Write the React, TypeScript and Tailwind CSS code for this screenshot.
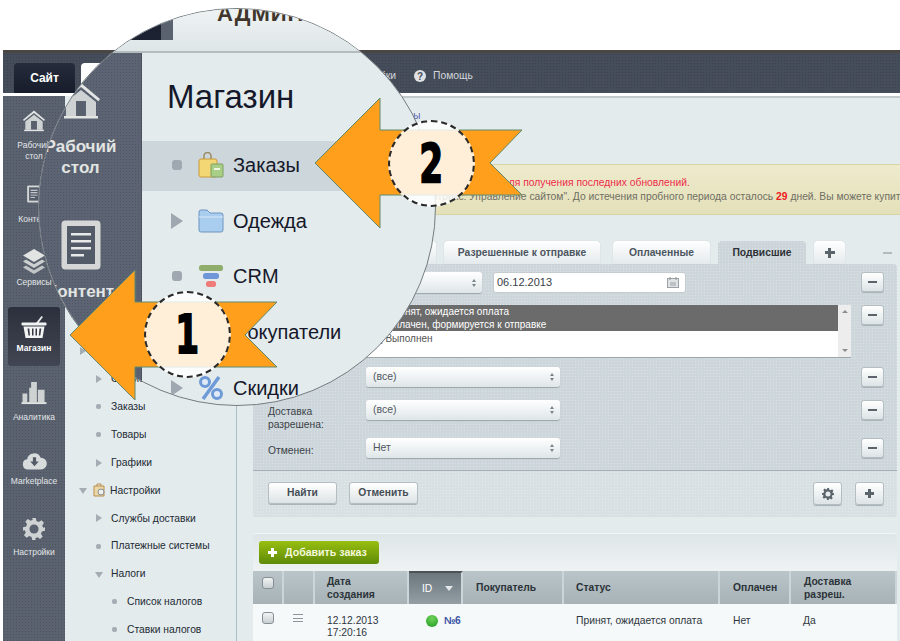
import { ReactNode } from "react";

const FONT = "[font-family:'Liberation_Sans',Arial,sans-serif]";
const DOTS_DARK =
  "[background-image:radial-gradient(rgba(0,0,0,0.14)_0.7px,transparent_0.8px)] [background-size:3px_3px]";
const DOTS_LIGHT =
  "[background-image:radial-gradient(rgba(255,255,255,0.3)_0.7px,transparent_0.8px)] [background-size:3px_3px]";

// Icons
const House = ({ className }: { className: string }) => (
  <svg viewBox="0 0 40 38" className={className}>
    <path d="M1 17 20 1l19 16-1.600 2.200L20 5 2.600 19.200z" fill="#e3e5e4" />
    <path fillRule="evenodd" d="M5 20 20 8l15 12v14H5zM15 19v15h10V19z" fill="#cfd2d2" />
    <rect x="16" y="20" width="8" height="14" fill="#59606d" />
    <rect x="3" y="34" width="34" height="2.500" fill="#e3e5e4" />
  </svg>
);
const Doc = ({ className }: { className: string }) => (
  <svg viewBox="0 0 40 50" className={className}>
    <rect x="0.500" y="0.500" width="39" height="49" rx="4" fill="#d4d7d6" />
    <rect x="6" y="6" width="28" height="38" fill="#535a68" />
    <path d="M10 13h20v2.500H10zM10 20h20v2.500H10zM10 27h20v2.500H10zM10 34h13v2.500H10z" fill="#e8eaea" />
  </svg>
);
const Layers = ({ className }: { className: string }) => (
  <svg viewBox="0 0 24 25" className={className}>
    <path d="M12 0 23 6.500 12 13 1 6.500z" fill="#e2e4e3" />
    <path d="M4 10.500 12 15.200l8-4.700 3 2L12 19 1 12.500z" fill="#cdd0d0" />
    <path d="M4 16.500 12 21.200l8-4.700 3 2L12 25 1 18.500z" fill="#c0c4c4" />
  </svg>
);
const Basket = ({ className }: { className: string }) => (
  <svg viewBox="0 0 26 24" className={className}>
    <path d="M15 8 20.500 1l1.400 1L17.500 8z" fill="#e9ebeb" />
    <rect x="0.500" y="7.500" width="25" height="3" rx="1" fill="#f2f3f3" />
    <path fillRule="evenodd" d="M2.500 11.500h21L21.500 23h-17zM6.500 13.500l1 7h1.500l-.7-7zM11 13.500v7h1.500v-7zM14.500 13.500v7H16v-7zM18.500 13.500l-.7 7h1.500l1-7z" fill="#f2f3f3" />
  </svg>
);
const Bars = ({ className }: { className: string }) => (
  <svg viewBox="0 0 26 24" className={className}>
    <path d="M1 12h5v9H1zM8 6h4v15H8zM10 0h6v21h-6zM17 8h7v13h-7z" fill="#cfd2d2" />
    <rect y="21" width="26" height="2" fill="#e3e5e4" />
  </svg>
);
const Cloud = ({ className }: { className: string }) => (
  <svg viewBox="0 0 26 19" className={className}>
    <path d="M6 18.500a5.500 5.500 0 0 1-.8-10.900A7.500 7.500 0 0 1 19.500 6 6.200 6.200 0 0 1 20 18.500z" fill="#d8dbdb" />
    <path d="M11.300 5.500h3.400V10h2.800L13 15 8.500 10h2.800z" fill="#535a68" />
  </svg>
);
const Gear = ({ className, fill = "#cfd2d2", hole = "#5a6270" }: { className: string; fill?: string; hole?: string }) => (
  <svg viewBox="0 0 24 24" className={className}>
    <path
      d="M10 0h4l.7 3.400 2.500 1 2.900-1.900 2.800 2.800-1.900 2.900 1 2.500L24 10v4l-3.400.7-1 2.500 1.900 2.900-2.800 2.800-2.900-1.900-2.500 1L14 24h-4l-.7-3.400-2.500-1-2.900 1.900-2.800-2.800 1.900-2.900-1-2.500L0 14v-4l3.400-.7 1-2.500-1.900-2.900L5.300 1.100l2.900 1.900 2.500-1z"
      fill={fill}
    />
    <circle cx="12" cy="12" r="5" fill={hole} />
  </svg>
);

const sideItems = [
  { icon: <House className="w-[24px] h-[22px]" />, label: "Рабочий стол", cls: "pt-[10px]", gap: "mt-[8px]" },
  { icon: <Doc className="w-[14px] h-[22px]" />, label: "Контент", cls: "pt-[15px]", gap: "mt-[9px]" },
  { icon: <Layers className="w-[24px] h-[25px]" />, label: "Сервисы", cls: "pt-[14px]", gap: "mt-[3px]" },
  { icon: <Basket className="w-[26px] h-[24px]" />, label: "Магазин", cls: "pt-[12px]", gap: "mt-[4px]", active: true },
  { icon: <Bars className="w-[26px] h-[23px]" />, label: "Аналитика", cls: "pt-[12px]", gap: "mt-[7px]" },
  { icon: <Cloud className="w-[25px] h-[18px]" />, label: "Marketplace", cls: "pt-[14px]", gap: "mt-[6px]" },
  { icon: <Gear className="w-[22px] h-[22px]" />, label: "Настройки", cls: "pt-[13px]", gap: "mt-[7px]" },
];

const navItems = [
  { label: "Отчеты", marker: "right", x: "ml-[14px]" },
  { label: "Статистика", marker: "right", x: "ml-[30px]" },
  { label: "Заказы", marker: "dot", x: "ml-[30px]" },
  { label: "Товары", marker: "dot", x: "ml-[30px]" },
  { label: "Графики", marker: "right", x: "ml-[30px]" },
  { label: "Настройки", marker: "down", x: "ml-[14px]", folder: true },
  { label: "Службы доставки", marker: "right", x: "ml-[30px]" },
  { label: "Платежные системы", marker: "dot", x: "ml-[30px]" },
  { label: "Налоги", marker: "down", x: "ml-[30px]" },
  { label: "Список налогов", marker: "dot", x: "ml-[46px]" },
  { label: "Ставки налогов", marker: "dot", x: "ml-[46px]" },
];

const Marker = ({ type }: { type: string }) => {
  if (type === "dot") return <span className="w-[5px] h-[5px] rounded-[2px] bg-[#a4adb4] mx-[1px]" />;
  if (type === "right")
    return <span className="w-0 h-0 border-y-[4px] border-y-transparent border-l-[6px] border-l-[#a4adb4]" />;
  return <span className="w-0 h-0 border-x-[4px] border-x-transparent border-t-[6px] border-t-[#a4adb4] mt-[1px]" />;
};

const NavRow = ({ item }: { item: (typeof navItems)[number] }) => (
  <div className="h-[27.900px] flex items-center text-[10.300px] text-[#222a33]">
    <div className={`${item.x} w-[7px] flex justify-center shrink-0`}>
      <Marker type={item.marker} />
    </div>
    {item.folder ? (
      <svg viewBox="0 0 12 14" className="w-[12px] h-[14px] ml-[7px]">
        <path d="M1 3h10v10H1z" fill="#ecd7a8" stroke="#b98f4c" />
        <path d="M4 3V1h4v2" fill="none" stroke="#b98f4c" />
        <circle cx="8" cy="9" r="3" fill="#eef0f0" stroke="#8a8f92" />
      </svg>
    ) : null}
    <span className={item.folder ? "ml-[5px]" : "ml-[9px]"}>{item.label}</span>
  </div>
);

const Tab = ({ children, w, active }: { children?: ReactNode; w: string; active?: boolean }) => (
  <div
    className={`${w} h-[23px] rounded-t-[4px] flex items-center justify-center text-[10.300px] font-bold ${
      active
        ? `bg-[#ccd5d9] text-[#2c3036] ${DOTS_LIGHT}`
        : "bg-gradient-to-b from-white to-[#e4eaec] text-[#4c5560] shadow-[0_0_1px_#a9b3b8]"
    }`}
  >
    {children}
  </div>
);

const Select = ({ text, className }: { text: string; className: string }) => (
  <div
    className={`${className} rounded-[3px] bg-gradient-to-b from-white to-[#dfe6e8] shadow-[0_1px_1px_#9ba6ab] flex items-center justify-between pl-[7px] pr-[6px] text-[10.500px] text-[#505860]`}
  >
    <span>{text}</span>
    <span className="flex flex-col gap-[2px]">
      <span className="w-0 h-0 border-x-[2.500px] border-x-transparent border-b-[3px] border-b-[#7b8489]" />
      <span className="w-0 h-0 border-x-[2.500px] border-x-transparent border-t-[3px] border-t-[#7b8489]" />
    </span>
  </div>
);

const SquareBtn = ({ children, className }: { children: ReactNode; className: string }) => (
  <div
    className={`${className} rounded-[3px] bg-gradient-to-b from-white to-[#dde4e6] border border-[#b4bdc2] shadow-[0_1px_0_#aab3b7] flex items-center justify-center shrink-0`}
  >
    {children}
  </div>
);

const Minus = () => (
  <SquareBtn className="w-[23px] h-[20px]">
    <span className="w-[9px] h-[2px] bg-[#5c646b]" />
  </SquareBtn>
);

const Plus = ({ size = "w-[9px] h-[9px]", color = "bg-[#5c646b]" }: { size?: string; color?: string }) => (
  <span className={`${size} relative block`}>
    <span className={`absolute left-0 right-0 top-1/2 h-[3px] -mt-[1.500px] ${color}`} />
    <span className={`absolute top-0 bottom-0 left-1/2 w-[3px] -ml-[1.500px] ${color}`} />
  </span>
);

const FilterRow = ({ label, children, cls }: { label?: ReactNode; children: ReactNode; cls: string }) => (
  <div className={`${cls} flex items-start pl-[15px] pr-[13px]`}>
    <div className="w-[98px] shrink-0 text-[10.300px] text-[#3b4249] leading-[13px]">{label}</div>
    {children}
    <div className="ml-auto">
      <Minus />
    </div>
  </div>
);

const Check = ({ cls }: { cls: string }) => (
  <span className={`${cls} block w-[12px] h-[12px] rounded-[3px] bg-gradient-to-b from-[#f2f4f4] to-[#c9cfd2] border border-[#868e93]`} />
);

const HeadCell = ({ children, active }: { children?: ReactNode; active?: boolean }) => (
  <div
    className={`h-full border-r-2 border-r-[#ccd5d9] flex items-center text-[10.300px] font-bold leading-[13px] ${
      active
        ? "bg-gradient-to-b from-[#6c767d] to-[#939fa4] text-white border-t-2 border-t-[#4b5359]"
        : "text-[#2c3338]"
    }`}
  >
    {children}
  </div>
);

// Magnifier list rows
const BigRow = ({ label, marker, icon, active }: { label: string; marker: "dot" | "right"; icon: ReactNode; active?: boolean }) => (
  <div className={`h-[50px] flex items-center pl-[28px] pb-[2px] ${active ? "bg-[#cdd6da]" : ""}`}>
    <div className="w-[13px] flex justify-center">
      {marker === "dot" ? (
        <span className="w-[10px] h-[10px] rounded-[3px] bg-[#9fa8b1]" />
      ) : (
        <span className="w-0 h-0 border-y-[8px] border-y-transparent border-l-[12px] border-l-[#9fa8b1]" />
      )}
    </div>
    <div className="w-[26px] h-[26px] ml-[15px] flex items-center justify-center">{icon}</div>
    <span className="ml-[9px] text-[20px] text-[#15182a]">{label}</span>
  </div>
);

const Magnifier = () => (
  <div className="absolute left-[38px] top-[8px] w-[398px] h-[398px] rounded-full overflow-hidden border border-[#767d81] bg-[#e4ebed] flex flex-col">
    <div className="h-[44px] shrink-0 bg-gradient-to-b from-[#eef2f3] to-[#dfe6e8] border-b-2 border-b-[#b4bcc0] relative overflow-hidden">
      <div className="absolute left-[88px] top-0 w-[34px] h-[31px] bg-[#1d2233]" />
      <div className="absolute left-[122px] top-0 w-[12px] h-[31px] bg-[#5a6270]" />
      <div className="absolute left-[178px] -top-[12px] text-[22px] font-bold text-[#40362c] tracking-[1px] whitespace-nowrap">
        АДМИНИСТРИРОВАНИЕ
      </div>
    </div>
    <div className="flex flex-1">
      <div className={`w-[122px] -ml-[19px] shrink-0 bg-[#5c6473] border-r border-r-[#4b515d] ${DOTS_DARK} flex flex-col items-center text-[#e2e5e2] text-[17px] font-bold leading-[21px] text-center pt-[29px]`}>
        <House className="w-[40px] h-[38px]" />
        <div className="mt-[16px]">
          Рабочий
          <br />
          стол
        </div>
        <Doc className="w-[40px] h-[50px] mt-[42px]" />
        <div className="mt-[11px]">Контент</div>
      </div>
      <div className="flex-1 flex flex-col">
        <div className="h-[88px] flex items-center pl-[25px] text-[33px] text-[#15182a] shrink-0">Магазин</div>
        <div className="flex flex-col gap-[5.700px]">
          <BigRow
            label="Заказы"
            marker="dot"
            active
            icon={
              <svg viewBox="0 0 26 26" className="w-[26px] h-[26px]">
                <path d="M6 8V4a3.500 3.500 0 0 1 7 0v4" fill="none" stroke="#9a8a60" strokeWidth="1.500" />
                <rect x="1" y="7" width="18" height="18" rx="2" fill="#f3d774" stroke="#c79a3a" />
                <rect x="13" y="12" width="12" height="13" rx="1" fill="#a9cf86" stroke="#7fa060" />
                <rect x="16" y="16" width="6" height="2" fill="#eef5e4" />
              </svg>
            }
          />
          <BigRow
            label="Одежда"
            marker="right"
            icon={
              <svg viewBox="0 0 26 24" className="w-[26px] h-[24px]">
                <path d="M1 3a2 2 0 0 1 2-2h6l3 3h11a2 2 0 0 1 2 2v15a2 2 0 0 1-2 2H3a2 2 0 0 1-2-2z" fill="#a9cdee" stroke="#6e94bf" />
                <path d="M1 8h24" stroke="#d8e8f6" />
              </svg>
            }
          />
          <BigRow
            label="CRM"
            marker="dot"
            icon={
              <svg viewBox="0 0 26 24" className="w-[26px] h-[24px]">
                <rect x="1" y="1" width="24" height="6" rx="2.500" fill="#8fae6c" />
                <rect x="5" y="9" width="16" height="6" rx="2.500" fill="#6f97d8" />
                <rect x="8" y="17" width="10" height="6" rx="2.500" fill="#ef7b7b" />
              </svg>
            }
          />
          <BigRow label="Покупатели" marker="dot" icon={<span />} />
          <BigRow
            label="Скидки"
            marker="right"
            icon={
              <svg viewBox="0 0 26 26" className="w-[26px] h-[26px]">
                <circle cx="7" cy="7" r="4.500" fill="#dfeaf6" stroke="#6e9ad8" strokeWidth="3" />
                <circle cx="19" cy="19" r="4.500" fill="#dfeaf6" stroke="#6e9ad8" strokeWidth="3" />
                <path d="M21 2 5 24" stroke="#6e9ad8" strokeWidth="3.500" />
              </svg>
            }
          />
        </div>
      </div>
    </div>
  </div>
);

const Badge = ({ n, cls }: { n: string; cls: string }) => (
  <div
    className={`${cls} absolute w-[87px] h-[87px] rounded-full border-2 border-dashed border-[#2a2a2a] bg-[rgba(255,255,255,0.83)] flex items-center justify-center text-[44px] leading-none font-bold text-black [font-family:'DejaVu_Sans',sans-serif] [-webkit-text-stroke:1.500px_black]`}
  >
    <span className="block scale-x-[0.78] scale-y-[1.2]">{n}</span>
  </div>
);

export default function App() {
  return (
    <div className={`relative w-[900px] h-[641px] overflow-hidden bg-white pt-[50px] pl-[3px] ${FONT}`}>
      {/* top bar */}
      <div className="h-[3px] bg-[#4a4643]" />
      <div className={`h-[40px] bg-[#464d5a] ${DOTS_DARK} flex items-end pl-[11px]`}>
        <div className="w-[61px] h-[30px] rounded-t-[4px] bg-gradient-to-b from-[#262c3c] to-[#171c2b] text-white text-[12px] font-bold flex items-center justify-center">
          Сайт
        </div>
        <div className="w-[100px] h-[30px] ml-[6px] rounded-t-[4px] bg-white" />
        <div className="h-[30px] w-[54px] pb-[4px] flex items-center justify-end ml-[161px] text-[10.300px] text-[#d3d7dc]">Настройки</div>
        <div className="h-[30px] pb-[4px] flex items-center ml-[18px] text-[10.300px] text-[#d3d7dc]">
          <span className="w-[12px] h-[12px] rounded-full bg-[#e0e2e4] text-[#464d5a] text-[10px] font-bold flex items-center justify-center">?</span>
          <span className="ml-[7px]">Помощь</span>
        </div>
      </div>
      <div className="h-[3px] bg-white" />

      <div className="flex h-[545px]">
        {/* sidebar */}
        <div className={`w-[62px] shrink-0 bg-[#5a6270] ${DOTS_DARK} pt-[4px] flex flex-col`}>
          {sideItems.map((item) => (
            <div key={item.label} className="h-[67.500px] flex justify-center relative">
              {item.active ? (
                <div className="absolute left-[5px] top-[4.500px] w-[52px] h-[59px] rounded-[3px] bg-gradient-to-b from-[#2c303c] to-[#414652]" />
              ) : null}
              <div className={`${item.cls} relative flex flex-col items-center w-[60px]`}>
                {item.icon}
                <div
                  className={`${item.gap} text-[8.500px] leading-[11px] text-center ${
                    item.active ? "text-white font-bold" : "text-[#e2e5e7]"
                  }`}
                >
                  {item.label === "Рабочий стол" ? (
                    <>
                      Рабочий
                      <br />
                      стол
                    </>
                  ) : (
                    item.label
                  )}
                </div>
              </div>
            </div>
          ))}
        </div>

        {/* left menu */}
        <div className="w-[172px] shrink-0 bg-[#e4ebed] border-r border-r-[#a9bccb] pt-[241px] overflow-hidden">
          {navItems.map((item) => (
            <NavRow key={item.label + item.x} item={item} />
          ))}
        </div>

        {/* main */}
        <div className="flex-1 min-w-0 bg-[#e4ebed] border-t-2 border-t-[#c2c9cc] pl-[16px] pr-[3px] overflow-hidden">
          <div className="h-[13px] mt-[10px] text-[10px] text-[#5a66b0] whitespace-nowrap pl-[84px]">Магазин &gt; Заказы</div>

          <div className="h-[51px] mt-[43px] -mr-[3px] bg-gradient-to-b from-[#eeebcd] to-[#e4e0b9] border-y border-y-[#d8d3a6] pl-[33px] text-[10.300px] leading-[14px] whitespace-nowrap pt-[11px] overflow-hidden">
            <div className="text-[#ee2b4a] pl-[57px]">Выполните обновление системы для получения последних обновлений.</div>
            <div className="text-[#6f6e62]">
              Вы используете продукт "1С-Битрикс: Управление сайтом". До истечения пробного периода осталось{" "}
              <b className="text-[#ee2020]">29</b> дней. Вы можете купить лицензию
            </div>
          </div>

          {/* tabs */}
          <div className="h-[23px] mt-[26px] flex items-end gap-[8px] pl-[40px]">
            <Tab w="w-[143px]">Все</Tab>
            <Tab w="w-[156px]">Разрешенные к отправке</Tab>
            <Tab w="w-[97px] ml-[5px]">Оплаченные</Tab>
            <Tab w="w-[88px]" active>
              Подвисшие
            </Tab>
            <Tab w="w-[31px]">
              <Plus size="w-[10px] h-[10px]" />
            </Tab>
            <span className="ml-[30px] mb-[10px] w-[9px] h-[2px] bg-[#b3babd]" />
          </div>

          {/* filter panel */}
          <div className={`h-[253px] rounded-[4px] bg-[#cdd6da] ${DOTS_LIGHT} flex flex-col`}>
            <FilterRow cls="mt-[8px]" label="Дата:">
              <Select text="" className="w-[116px] h-[21px]" />
              <div className="w-[193px] h-[21px] ml-[11px] rounded-[3px] bg-white border border-[#c4ccd0] flex items-center justify-between pl-[3px] pr-[6px] text-[11px] text-[#3a4047]">
                <span>06.12.2013</span>
                <svg viewBox="0 0 12 11" className="w-[12px] h-[11px]">
                  <rect x="0.500" y="1.500" width="11" height="9" fill="#dfe3e4" stroke="#9aa2a7" />
                  <path d="M3 0v3M9 0v3" stroke="#8b9398" />
                  <path d="M3 6h6M3 8h6" stroke="#9aa2a7" />
                </svg>
              </div>
            </FilterRow>

            <FilterRow cls="mt-[12px]" label="Статус:">
              <div className="w-[485px] h-[52px] bg-white flex text-[10px] leading-[13px] shadow-[0_1px_0_#9ba6ab]">
                <div className="flex-1 pl-[5px]">
                  <div className="bg-[#6b6b6b] text-white -ml-[5px] pl-[5px] h-[26px] flex flex-col justify-center">
                    <div>[N] Принят, ожидается оплата</div>
                    <div>[P] Оплачен, формируется к отправке</div>
                  </div>
                  <div className="text-[#555] mt-[1px]">[F] Выполнен</div>
                </div>
                <div className="w-[13px] bg-[#ededed] flex flex-col items-center justify-between py-[5px]">
                  <span className="w-0 h-0 border-x-[3px] border-x-transparent border-b-[3px] border-b-[#8d8d8d]" />
                  <span className="w-0 h-0 border-x-[3px] border-x-transparent border-t-[3px] border-t-[#8d8d8d]" />
                </div>
              </div>
            </FilterRow>

            <FilterRow cls="mt-[10px]" label="Оплачен:">
              <Select text="(все)" className="w-[194px] h-[20px]" />
            </FilterRow>

            <FilterRow
              cls="mt-[13px]"
              label={
                <div className="pt-[5px]">
                  Доставка
                  <br />
                  разрешена:
                </div>
              }
            >
              <Select text="(все)" className="w-[194px] h-[20px]" />
            </FilterRow>

            <FilterRow cls="mt-[7px]" label={<div className="pt-[6px]">Отменен:</div>}>
              <Select text="Нет" className="w-[194px] h-[20px]" />
            </FilterRow>

            <div className="h-[1px] mt-[12px] bg-[#a4afb4]" />
            <div className={`flex-1 rounded-b-[4px] bg-[#d9e0e3] ${DOTS_LIGHT} flex items-start pt-[11px] pl-[15px] pr-[13px] text-[10.300px] font-bold text-[#454d55]`}>
              <SquareBtn className="w-[69px] h-[22px]">Найти</SquareBtn>
              <SquareBtn className="w-[69px] h-[22px] ml-[12px]">Отменить</SquareBtn>
              <SquareBtn className="w-[29px] h-[23px] ml-auto">
                <Gear className="w-[12px] h-[12px]" fill="#5c646b" hole="#e8ecee" />
              </SquareBtn>
              <SquareBtn className="w-[29px] h-[23px] ml-[13px]">
                <Plus />
              </SquareBtn>
            </div>
          </div>

          {/* table */}
          <div className="mt-[16px] rounded-t-[4px] border-t border-t-[#f2f5f6] h-[38px] bg-gradient-to-b from-[#dfe6e8] to-[#eef2f3] pl-[6px] pt-[7px]">
            <div className="w-[120px] h-[23px] rounded-[3px] bg-gradient-to-b from-[#98bf10] to-[#5f8a07] flex items-center pl-[9px] text-[10.600px] font-bold text-[#f4f8dc]">
              <Plus size="w-[9px] h-[9px]" color="bg-white" />
              <span className="ml-[8px]">Добавить заказ</span>
            </div>
          </div>
          <div className="h-[33px] bg-gradient-to-b from-[#b9c5c9] to-[#a6b2b6] grid grid-cols-[31px_31px_94px_54px_101px_156px_71px_106px_1fr] items-stretch">
            <HeadCell>
              <Check cls="ml-[9px] -mt-[9px]" />
            </HeadCell>
            <HeadCell />
            <HeadCell>
              <div className="pl-[12px]">
                Дата
                <br />
                создания
              </div>
            </HeadCell>
            <HeadCell active>
              <div className="pl-[13px] flex items-center font-normal">
                ID
                <span className="ml-[13px] w-0 h-0 border-x-[4px] border-x-transparent border-t-[5px] border-t-[#e4e8ea]" />
              </div>
            </HeadCell>
            <HeadCell>
              <div className="pl-[13px]">Покупатель</div>
            </HeadCell>
            <HeadCell>
              <div className="pl-[12px]">Статус</div>
            </HeadCell>
            <HeadCell>
              <div className="pl-[13px]">Оплачен</div>
            </HeadCell>
            <HeadCell>
              <div className="pl-[13px]">
                Доставка
                <br />
                разреш.
              </div>
            </HeadCell>
            <div />
          </div>
          <div className="h-[37px] bg-[#f5f9fa] grid grid-cols-[31px_31px_94px_54px_101px_156px_71px_106px_1fr] text-[10.300px] leading-[12px] text-[#2f3640]">
            <div>
              <Check cls="ml-[9px] mt-[8px]" />
            </div>
            <div className="pl-[9px] pt-[10px]">
              <span className="block w-[10px] h-[8px] border-y border-y-[#8e959a] relative">
                <span className="absolute left-0 right-0 top-[2.500px] h-[1px] bg-[#8e959a]" />
              </span>
            </div>
            <div className="pl-[12px] pt-[11px]">
              12.12.2013
              <br />
              17:20:16
            </div>
            <div className="flex items-start pl-[17px] pt-[11px]">
              <span className="w-[12px] h-[12px] rounded-full bg-[radial-gradient(circle_at_50%_30%,#6fd35a,#1f9a1f)] shrink-0" />
              <span className="ml-[6px] text-[#3b55a5] font-bold tracking-[-0.5px]">№6</span>
            </div>
            <div />
            <div className="pl-[12px] pt-[11px] whitespace-nowrap">Принят, ожидается оплата</div>
            <div className="pl-[13px] pt-[11px]">Нет</div>
            <div className="pl-[12px] pt-[11px]">Да</div>
            <div />
          </div>
        </div>
      </div>

      {/* magnifier overlay */}
      <Magnifier />

      {/* callout arrows */}
      <svg className="absolute left-0 top-0" width="900" height="641" viewBox="0 0 900 641">
        <path d="M70 335 135 270v32H277L245 335 277 367H135v33z" fill="#ff9f1c" stroke="#5f8a70" strokeWidth="1" />
        <path d="M315 163 380 98v32H522L490 163 522 195H380v33z" fill="#ff9f1c" stroke="#5f8a70" strokeWidth="1" />
      </svg>
      <Badge n="1" cls="left-[144px] top-[291px]" />
      <Badge n="2" cls="left-[388px] top-[120px]" />
    </div>
  );
}
